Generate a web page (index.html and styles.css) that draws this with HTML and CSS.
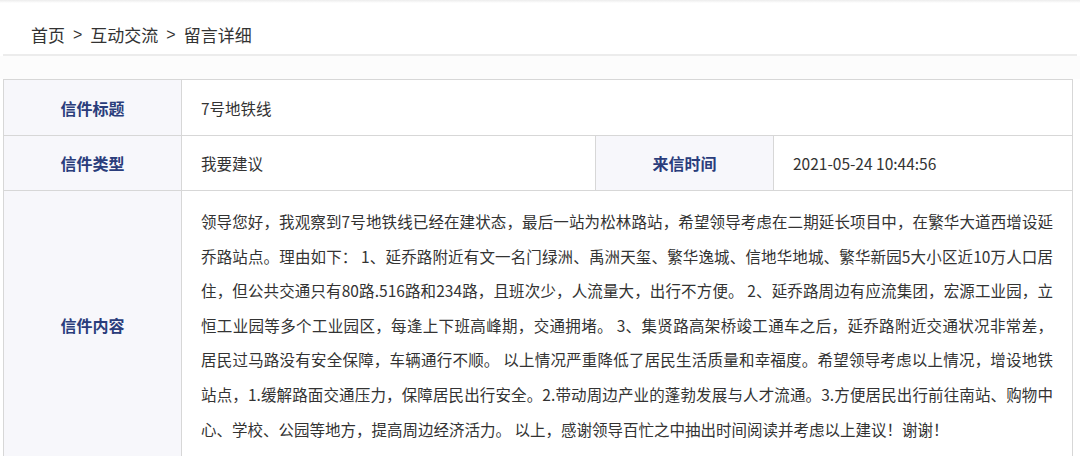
FILE: index.html
```html
<!DOCTYPE html>
<html lang='zh-CN'>

<head>
    <meta charset='UTF-8'>
    <title>留言详细</title>
    <link rel="stylesheet" href="styles.css">
</head>

<body>
    <div class="topbar"></div>
    <div class="crumb">
        <a href="#">首页</a>
        <span class="sep">&gt;</span>
        <a href="#">互动交流</a>
        <span class="sep">&gt;</span>
        <span>留言详细</span>
    </div>
    <div class="gap"></div>
    <table class="detail">
        <colgroup>
            <col class="c-label">
            <col class="c-value">
            <col class="c-label">
            <col class="c-time">
        </colgroup>
        <tr class="row-title">
            <th>信件标题</th>
            <td colspan="3">7号地铁线</td>
        </tr>
        <tr class="row-type">
            <th>信件类型</th>
            <td>我要建议</td>
            <th>来信时间</th>
            <td>2021-05-24 10:44:56</td>
        </tr>
        <tr class="row-content">
            <th>信件内容</th>
            <td colspan="3" class="content">
                <!-- lines broken as in the original page -->
                <span class="ln">领导您好，我观察到7号地铁线已经在建状态，最后一站为松林路站，希望领导考虑在二期延长项目中，在繁华大道西增设延</span>
                <span class="ln">乔路站点。理由如下： 1、延乔路附近有文一名门绿洲、禹洲天玺、繁华逸城、信地华地城、繁华新园5大小区近10万人口居</span>
                <span class="ln">住，但公共交通只有80路.516路和234路，且班次少，人流量大，出行不方便。 2、延乔路周边有应流集团，宏源工业园，立</span>
                <span class="ln">恒工业园等多个工业园区，每逢上下班高峰期，交通拥堵。 3、集贤路高架桥竣工通车之后，延乔路附近交通状况非常差，</span>
                <span class="ln">居民过马路没有安全保障，车辆通行不顺。 以上情况严重降低了居民生活质量和幸福度。希望领导考虑以上情况，增设地铁</span>
                <span class="ln">站点，1.缓解路面交通压力，保障居民出行安全。2.带动周边产业的蓬勃发展与人才流通。3.方便居民出行前往南站、购物中</span>
                <span class="ln last">心、学校、公园等地方，提高周边经济活力。 以上，感谢领导百忙之中抽出时间阅读并考虑以上建议！谢谢！</span>
            </td>
        </tr>
    </table>
</body>

</html>
```

FILE: styles.css
```css
* {
    padding: 0;
    margin: 0;
    box-sizing: border-box;
}

body {
    background: #fff;
    font-family: "Noto Sans CJK SC", "Noto Sans", sans-serif;
    color: #333;
    overflow: hidden;
}

.topbar {
    height: 3px;
    background: linear-gradient(#ececec, #fff);
}

.crumb {
    height: 53px;
    margin: 0 3px;
    padding: 12px 28px 0;
    display: flex;
    align-items: center;
    font-size: 17px;
    color: #333;
    border-bottom: #ececec solid 2px;
}

.crumb a {
    color: #333;
    text-decoration: none;
}

.crumb .sep {
    margin: 0 8px;
    font-family: "Liberation Sans", sans-serif;
    font-size: 16px;
}

.gap {
    height: 23px;
    background: #fcfcfc;
}

.detail {
    margin-left: 3px;
    width: 1070px;
    border-collapse: collapse;
    table-layout: fixed;
    font-size: 15.5px;
}

.c-label {
    width: 178px;
}

.c-value {
    width: 414px;
}

.detail th,
.detail td {
    border: #d7d7d7 solid 1px;
    vertical-align: middle;
}

.detail th {
    background: #f7f7fb;
    color: #2a3d7b;
    font-weight: bold;
    font-size: 16px;
    text-align: center;
}

.detail td {
    padding: 0 19px;
    color: #333;
    text-align: left;
}

.row-title {
    height: 56px;
}

.row-type {
    height: 55px;
}

.detail td.content {
    padding: 13px 19px;
    line-height: 34.6px;
}

.content .ln {
    display: block;
    white-space: nowrap;
    text-align: justify;
    text-align-last: justify;
}

.content .ln.last {
    text-align-last: left;
}
```
